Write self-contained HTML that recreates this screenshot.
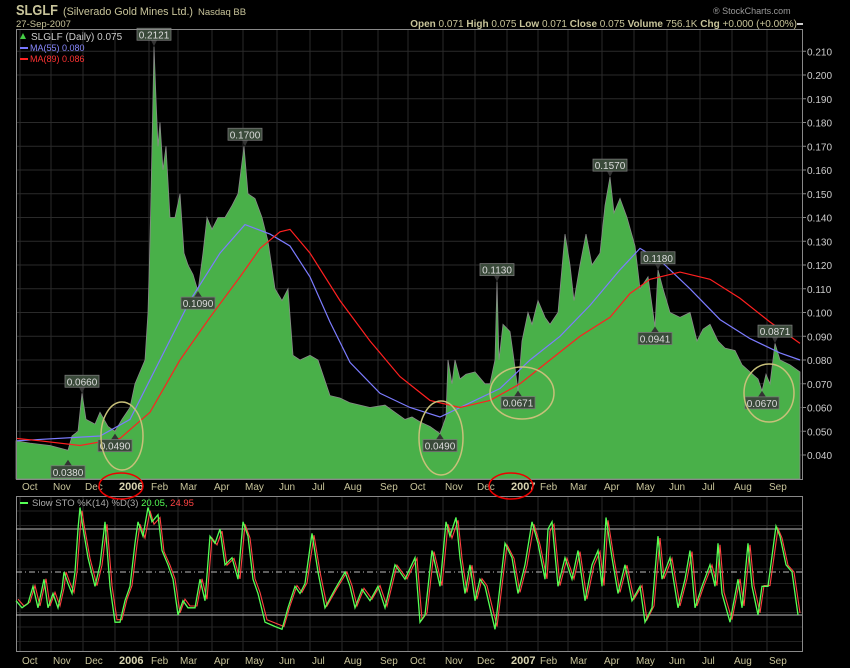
<!DOCTYPE html><html><head><meta charset="utf-8"><style>
body{margin:0;background:#000;width:850px;height:668px;overflow:hidden;font-family:"Liberation Sans",sans-serif}
svg{display:block}
text{font-family:"Liberation Sans",sans-serif}
</style></head><body>
<svg id="s" width="850" height="668" xmlns="http://www.w3.org/2000/svg">
<rect width="850" height="668" fill="#000"/>
<g id="grid"></g>
<path id="area" fill="#49b049" stroke="#8a8a8a" stroke-width="0.8"/>
<polyline id="ma55" fill="none" stroke="#7c7cff" stroke-width="1.2"/>
<polyline id="ma89" fill="none" stroke="#ff2020" stroke-width="1.2"/>
<g id="ann"></g>
<rect x="16.5" y="29.5" width="786" height="450" fill="none" stroke="#888"/>
<rect x="16.5" y="496.5" width="786" height="155" fill="none" stroke="#888"/>
<line x1="16" y1="529" x2="802" y2="529" stroke="#bbb"/>
<line x1="16" y1="615" x2="802" y2="615" stroke="#bbb"/>
<line x1="16" y1="572" x2="802" y2="572" stroke="#bbb" stroke-dasharray="6,3,1,3"/>
<polyline id="stoD" fill="none" stroke="#ff4040" stroke-width="1.1"/>
<polyline id="stoK" fill="none" stroke="#55ff55" stroke-width="1.3"/>
<text x="16" y="15" font-size="15" font-weight="bold" fill="#c8c49a" textLength="42" lengthAdjust="spacingAndGlyphs">SLGLF</text>
<text x="63" y="15" font-size="11" fill="#c8c49a" textLength="130" lengthAdjust="spacingAndGlyphs">(Silverado Gold Mines Ltd.)</text>
<text x="198" y="15" font-size="9.5" fill="#c8c49a">Nasdaq BB</text>
<text x="16" y="27" font-size="9.5" fill="#c8c49a">27-Sep-2007</text>
<text x="713" y="14" font-size="9" fill="#999">® StockCharts.com</text>
<text x="797" y="27" font-size="10" fill="#c8c49a" text-anchor="end"><tspan font-weight="bold">Open</tspan> 0.071  <tspan font-weight="bold">High</tspan> 0.075  <tspan font-weight="bold">Low</tspan> 0.071  <tspan font-weight="bold">Close</tspan> 0.075  <tspan font-weight="bold">Volume</tspan> 756.1K  <tspan font-weight="bold">Chg</tspan> +0.000 (+0.00%)</text>
<rect x="797" y="23" width="6" height="2" fill="#ccc"/>
<path d="M20 39 L23 33 L26 39Z" fill="#4c4"/>
<text x="31" y="40" font-size="10" fill="#ccc">SLGLF (Daily) 0.075</text>
<rect x="20" y="47" width="8" height="2" fill="#77f"/><text x="30" y="51" font-size="9" fill="#88f">MA(55) 0.080</text>
<rect x="20" y="58" width="8" height="2" fill="#f22"/><text x="30" y="62" font-size="9" fill="#f33">MA(89) 0.086</text>
<rect x="20" y="502" width="8" height="2" fill="#5f5"/>
<text x="32" y="506" font-size="9.5" fill="#aaa">Slow STO %K(14) %D(3) <tspan fill="#5f5">20.05,</tspan> <tspan fill="#f44">24.95</tspan></text>
<g id="lbl"></g>
</svg>
<script>
var NS="http://www.w3.org/2000/svg",S=document.getElementById('s');
function Y(p){return 455-(p-0.04)*2375}
function el(par,t,a,txt){var e=document.createElementNS(NS,t);for(var k in a)e.setAttribute(k,a[k]);if(txt)e.textContent=txt;document.getElementById(par)?document.getElementById(par).appendChild(e):S.appendChild(e);return e}
var g='grid';
for(var p=0.04;p<=0.2101;p+=0.01){var y=Y(p);el(g,'line',{x1:16,x2:802,y1:y,y2:y,stroke:'#2a2a2a'});el('lbl','line',{x1:802,x2:806,y1:y,y2:y,stroke:'#888'});el('lbl','text',{x:807,y:y+4,'font-size':10,fill:'#ccc'},p.toFixed(3))}
var mx=[[20,'Oct'],[51,'Nov'],[83,'Dec'],[115,'2006'],[149,'Feb'],[178,'Mar'],[212,'Apr'],[243,'May'],[277,'Jun'],[310,'Jul'],[342,'Aug'],[378,'Sep'],[408,'Oct'],[443,'Nov'],[475,'Dec'],[507,'2007'],[538,'Feb'],[568,'Mar'],[602,'Apr'],[634,'May'],[667,'Jun'],[700,'Jul'],[732,'Aug'],[767,'Sep']];
mx.forEach(function(m){var x=m[0];el(g,'line',{x1:x,x2:x,y1:30,y2:479,stroke:'#2a2a2a'});el(g,'line',{x1:x,x2:x,y1:497,y2:651,stroke:'#2a2a2a'});
var b=m[1].length==4;[490,664].forEach(function(yy){el('lbl','text',{x:x+(b?4:2),y:yy,'font-size':b?11:10,'font-weight':b?'bold':'normal',fill:b?'#d8d4b0':'#c8c49a','font-family':b?'Liberation Serif':'Liberation Sans'},m[1])})});
for(var y=511;y<651;y+=14.5)el(g,'line',{x1:16,x2:802,y1:y,y2:y,stroke:'#222'});
var pr=[16,.046,30,.045,50,.044,68,.042,72,.048,78,.05,82,.066,86,.055,95,.053,100,.058,108,.052,115,.05,122,.055,130,.06,135,.07,140,.075,145,.08,148,.1,150,.13,152,.17,154,.212,156,.19,158,.17,160,.18,163,.16,166,.17,170,.14,175,.14,180,.15,184,.125,188,.12,193,.116,198,.109,203,.125,207,.14,212,.135,218,.14,225,.14,232,.145,238,.15,244,.17,248,.15,255,.148,262,.14,268,.13,275,.11,282,.105,288,.11,293,.082,300,.08,310,.082,318,.08,322,.075,330,.065,340,.064,350,.062,360,.061,370,.06,385,.061,395,.058,405,.055,412,.056,420,.054,430,.052,440,.049,446,.056,448,.08,452,.07,455,.08,460,.072,466,.074,475,.075,485,.07,490,.07,495,.08,497,.113,499,.08,503,.095,510,.092,514,.08,518,.067,522,.088,528,.1,532,.095,538,.105,545,.098,550,.095,558,.1,565,.133,570,.12,574,.105,580,.12,586,.133,592,.12,600,.125,605,.145,610,.157,614,.142,620,.148,627,.14,635,.128,640,.11,648,.115,655,.094,658,.118,663,.11,670,.1,680,.098,690,.1,697,.088,703,.093,710,.095,718,.088,725,.085,735,.084,742,.078,750,.075,758,.072,762,.067,766,.074,770,.07,775,.087,780,.08,790,.078,800,.075];
var d='M16 479';for(var i=0;i<pr.length;i+=2)d+=' L'+pr[i]+' '+Y(pr[i+1]).toFixed(1);d+=' L800 479Z';document.getElementById('area').setAttribute('d',d);
function pl(id,a){var s='';for(var i=0;i<a.length;i+=2)s+=a[i]+','+Y(a[i+1]).toFixed(1)+' ';document.getElementById(id).setAttribute('points',s)}
pl('ma55',[16,.046,100,.048,130,.055,160,.08,190,.105,220,.125,245,.137,270,.133,290,.128,310,.115,330,.096,350,.079,380,.066,410,.06,440,.056,470,.062,500,.068,530,.08,560,.09,590,.103,620,.118,640,.127,660,.122,690,.11,720,.097,750,.089,780,.083,800,.08]);
pl('ma89',[16,.047,40,.046,80,.044,120,.047,150,.058,180,.08,210,.098,240,.115,260,.127,280,.134,290,.135,310,.125,340,.105,370,.088,400,.073,430,.063,460,.06,490,.063,520,.07,550,.08,580,.09,610,.098,630,.108,650,.114,680,.117,710,.114,740,.106,770,.096,800,.087]);
var st=[16,30,22,25,28,28,33,40,38,25,44,45,48,25,53,35,58,25,62,38,64,50,68,42,72,35,75,50,78,80,80,95,82,85,88,60,95,40,100,55,105,85,110,40,115,15,120,15,125,30,130,40,135,70,138,85,143,75,148,95,152,85,158,90,162,65,168,55,173,45,178,20,183,30,188,25,195,25,200,45,205,30,210,75,215,70,220,80,225,55,232,60,238,45,243,85,248,75,253,45,258,35,265,15,275,12,282,10,288,25,295,40,300,35,305,42,312,77,318,50,325,25,335,38,345,50,350,40,355,25,362,38,370,30,378,40,385,25,395,55,405,45,415,60,420,15,425,20,432,65,440,40,446,85,450,75,456,88,460,60,465,35,470,55,475,30,480,45,485,40,495,10,500,40,505,70,512,60,518,35,525,55,532,85,538,70,545,45,548,80,552,85,558,40,565,60,572,45,578,65,585,30,592,55,598,65,602,40,606,88,612,60,618,35,625,55,632,30,640,40,645,15,652,25,658,75,662,45,670,60,678,25,685,45,690,65,695,25,702,40,710,55,715,40,718,70,722,35,730,15,738,45,742,25,748,70,752,40,758,20,762,40,768,40,776,82,780,75,786,55,792,50,798,20];
function sy(v){return 615-(v-20)*43/30}
var k='',dd='';for(var i=0;i<st.length;i+=2){k+=st[i]+','+sy(st[i+1]).toFixed(1)+' ';dd+=(st[i]+2)+','+sy(st[i+1]*0.95+2.5).toFixed(1)+' '}
document.getElementById('stoK').setAttribute('points',k);document.getElementById('stoD').setAttribute('points',dd);
var ab=[[154,.2121,1],[82,.066,1],[245,.17,1],[497,.113,1],[610,.157,1],[658,.118,1],[775,.0871,1],[68,.038,0],[115,.049,0],[198,.109,0],[440,.049,0],[518,.0671,0],[655,.0941,0],[762,.067,0]];
ab.forEach(function(a){var x=a[0],y=Y(a[1]),t=a[1].toFixed(4),w=34,bx=x-w/2,by;if(a[2]){by=y-18;el('ann','path',{d:'M'+(x-3)+' '+(y-6)+' L'+x+' '+y+' L'+(x+3)+' '+(y-6)+'Z',fill:'#333'})}else{by=y+6;el('ann','path',{d:'M'+(x-4)+' '+(y+6)+' L'+x+' '+y+' L'+(x+4)+' '+(y+6)+'Z',fill:'#333'})}
el('ann','rect',{x:bx,y:by,width:w,height:12,fill:'#3a4a3a',stroke:'#777','stroke-width':.8});el('ann','text',{x:x,y:by+10,'font-size':10,fill:'#ddd','text-anchor':'middle'},t)});
[[122,436,21,34],[441,438,22,37],[522,393,32,26],[769,393,25,29]].forEach(function(c){el('ann','ellipse',{cx:c[0],cy:c[1],rx:c[2],ry:c[3],fill:'none',stroke:'#c8c07a','stroke-width':1.5})});
[[119,486],[509,486]].forEach(function(c){el('lbl','ellipse',{cx:c[0]+2,cy:c[1],rx:22,ry:13,fill:'none',stroke:'#e00','stroke-width':1.5})});
</script>
</body></html>
